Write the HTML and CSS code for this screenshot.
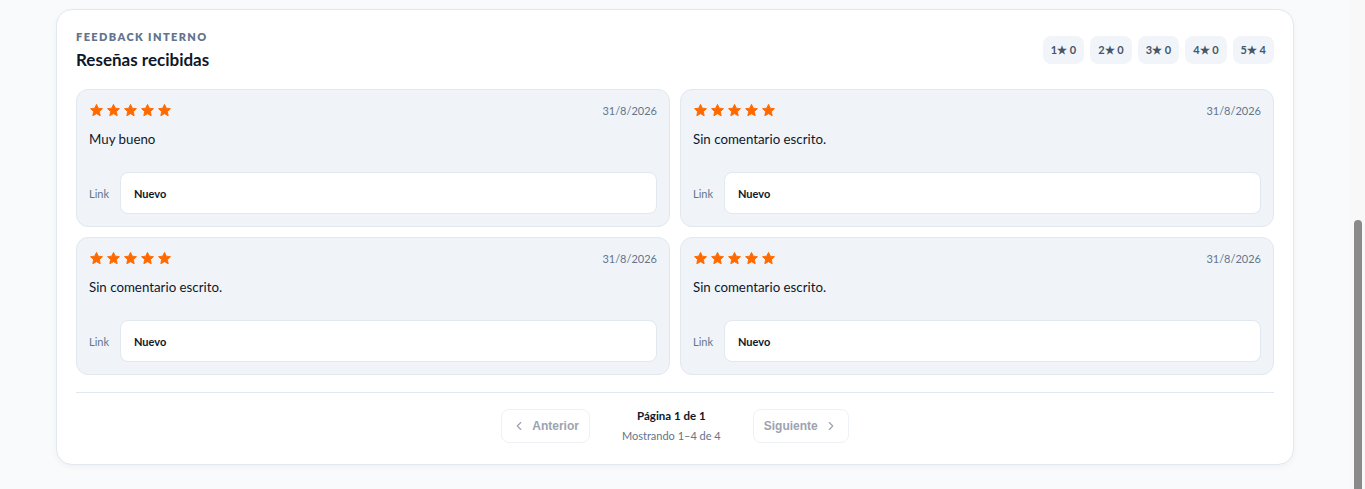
FILE: index.html
```html
<!DOCTYPE html>
<html lang="es">
<head>
    <meta charset="UTF-8">
    <meta name="viewport" content="width=device-width, initial-scale=1.0">
    <title>Reseñas recibidas</title>
    <link rel="stylesheet" href="styles.css">
</head>
<body>
    <div class="page">
        <section class="panel">
            <div class="panel-head">
                <div>
                    <div class="eyebrow">FEEDBACK INTERNO</div>
                    <h2 class="panel-title">Reseñas recibidas</h2>
                </div>
                <div class="chips">
                    <span class="chip">1★ 0</span>
                    <span class="chip">2★ 0</span>
                    <span class="chip">3★ 0</span>
                    <span class="chip">4★ 0</span>
                    <span class="chip">5★ 4</span>
                </div>
            </div>

            <div class="reviews" id="reviews"></div>

            <div class="pager">
                <button class="pager-btn" disabled>
                    <svg width="14" height="14" viewBox="0 0 24 24" fill="none" stroke="currentColor" stroke-width="2" stroke-linecap="round" stroke-linejoin="round"><path d="M15 18l-6-6 6-6"/></svg>
                    Anterior
                </button>
                <div class="pager-info">
                    <div class="pager-page">Página 1 de 1</div>
                    <div class="pager-count">Mostrando 1–4 de 4</div>
                </div>
                <button class="pager-btn" disabled>
                    Siguiente
                    <svg width="14" height="14" viewBox="0 0 24 24" fill="none" stroke="currentColor" stroke-width="2" stroke-linecap="round" stroke-linejoin="round"><path d="M9 18l6-6-6-6"/></svg>
                </button>
            </div>
        </section>
    </div>

    <div class="scrollbar"><div class="scrollbar-thumb"></div></div>

    <script>
        // reseñas de ejemplo
        const reviews = [
            { stars: 5, date: '31/8/2026', text: 'Muy bueno', link: 'Nuevo' },
            { stars: 5, date: '31/8/2026', text: 'Sin comentario escrito.', link: 'Nuevo' },
            { stars: 5, date: '31/8/2026', text: 'Sin comentario escrito.', link: 'Nuevo' },
            { stars: 5, date: '31/8/2026', text: 'Sin comentario escrito.', link: 'Nuevo' }
        ];

        const star = '<svg class="star" viewBox="0 0 24 24"><path d="M12 2.2l2.9 6.1 6.6.8-4.9 4.6 1.3 6.6L12 17l-5.9 3.3 1.3-6.6L2.5 9.1l6.6-.8z" stroke-linejoin="round"/></svg>';

        const list = document.getElementById('reviews');
        reviews.forEach(r => {
            const card = document.createElement('div');
            card.className = 'review';
            card.innerHTML = `
                <div class="review-top">
                    <div class="stars">${star.repeat(r.stars)}</div>
                    <span class="review-date">${r.date}</span>
                </div>
                <p class="review-text">${r.text}</p>
                <div class="review-link">
                    <span class="link-label">Link</span>
                    <div class="link-box">${r.link}</div>
                </div>`;
            list.appendChild(card);
        });
    </script>
</body>
</html>
```

FILE: styles.css
```css
* {
    margin: 0;
    padding: 0;
    box-sizing: border-box;
}

body {
    background-color: #f8fafc;
    font-family: Lato, "Noto Sans", sans-serif;
    color: #0f172a;
}

.page {
    padding: 9px 71px 24px 56px;
}

.panel {
    background-color: white;
    border: 1px solid #e2e8f0;
    border-radius: 16px;
    padding: 19px 19px 21px;
    box-shadow: 0 2px 6px rgba(15, 23, 42, 0.04);
}

.panel-head {
    display: flex;
    justify-content: space-between;
    align-items: center;
    margin-bottom: 18px;
}

.eyebrow {
    font-size: 11px;
    font-weight: 800;
    letter-spacing: 1.4px;
    color: #64748b;
    line-height: 16px;
}

.panel-title {
    font-size: 17px;
    font-weight: 700;
    line-height: 22px;
    margin-top: 4px;
    color: #0f172a;
}

.chips {
    display: flex;
    gap: 6px;
}

.chip {
    background-color: #f1f5f9;
    border-radius: 8px;
    height: 28px;
    padding: 0 8px;
    display: flex;
    align-items: center;
    font-size: 11px;
    font-weight: 700;
    color: #475569;
}

.reviews {
    display: grid;
    grid-template-columns: 1fr 1fr;
    gap: 10px;
}

.review {
    background-color: #f0f4f9;
    border: 1px solid #e2e8f0;
    border-radius: 12px;
    padding: 12px;
}

.review-top {
    display: flex;
    justify-content: space-between;
    align-items: center;
    height: 17px;
}

.stars {
    display: flex;
    gap: 2px;
}

.star {
    width: 15px;
    height: 15px;
    fill: #ff6a00;
    stroke: #ff6a00;
    stroke-width: 1.5;
}

.review-date {
    font-size: 11px;
    color: #64748b;
}

.review-text {
    font-size: 13.3px;
    line-height: 18px;
    margin-top: 11px;
    height: 42px;
}

.review-link {
    display: flex;
    align-items: center;
    gap: 9px;
}

.link-label {
    font-size: 11px;
    color: #64748b;
    width: 22px;
}

.link-box {
    flex: 1;
    height: 42px;
    background-color: white;
    border: 1px solid #e2e8f0;
    border-radius: 8px;
    padding: 0 13px;
    display: flex;
    align-items: center;
    font-size: 11px;
    font-weight: 700;
    color: #0f172a;
}

.pager {
    border-top: 1px solid #e2e8f0;
    margin-top: 17px;
    padding-top: 15px;
    display: flex;
    justify-content: center;
    align-items: center;
    gap: 32px;
}

.pager-btn {
    display: flex;
    align-items: center;
    gap: 6px;
    height: 34px;
    padding: 0 10px;
    background-color: white;
    border: 1px solid #eef2f6;
    border-radius: 8px;
    font-family: "Liberation Sans", Arial, sans-serif;
    font-size: 12px;
    font-weight: 700;
    color: #9ca3af;
}

.pager-info {
    text-align: center;
}

.pager-page {
    font-size: 11.5px;
    font-weight: 700;
    line-height: 16px;
}

.pager-count {
    font-size: 11px;
    color: #64748b;
    margin-top: 5px;
    line-height: 14px;
}

.scrollbar {
    position: fixed;
    top: 0;
    right: 0;
    bottom: 0;
    width: 15px;
    background-color: #f8f8f8;
    display: flex;
    flex-direction: column;
    justify-content: flex-end;
    align-items: center;
}

.scrollbar-thumb {
    width: 8px;
    height: 269px;
    border-radius: 4px 4px 0 0;
    background-color: #8a8a8a;
}
```
